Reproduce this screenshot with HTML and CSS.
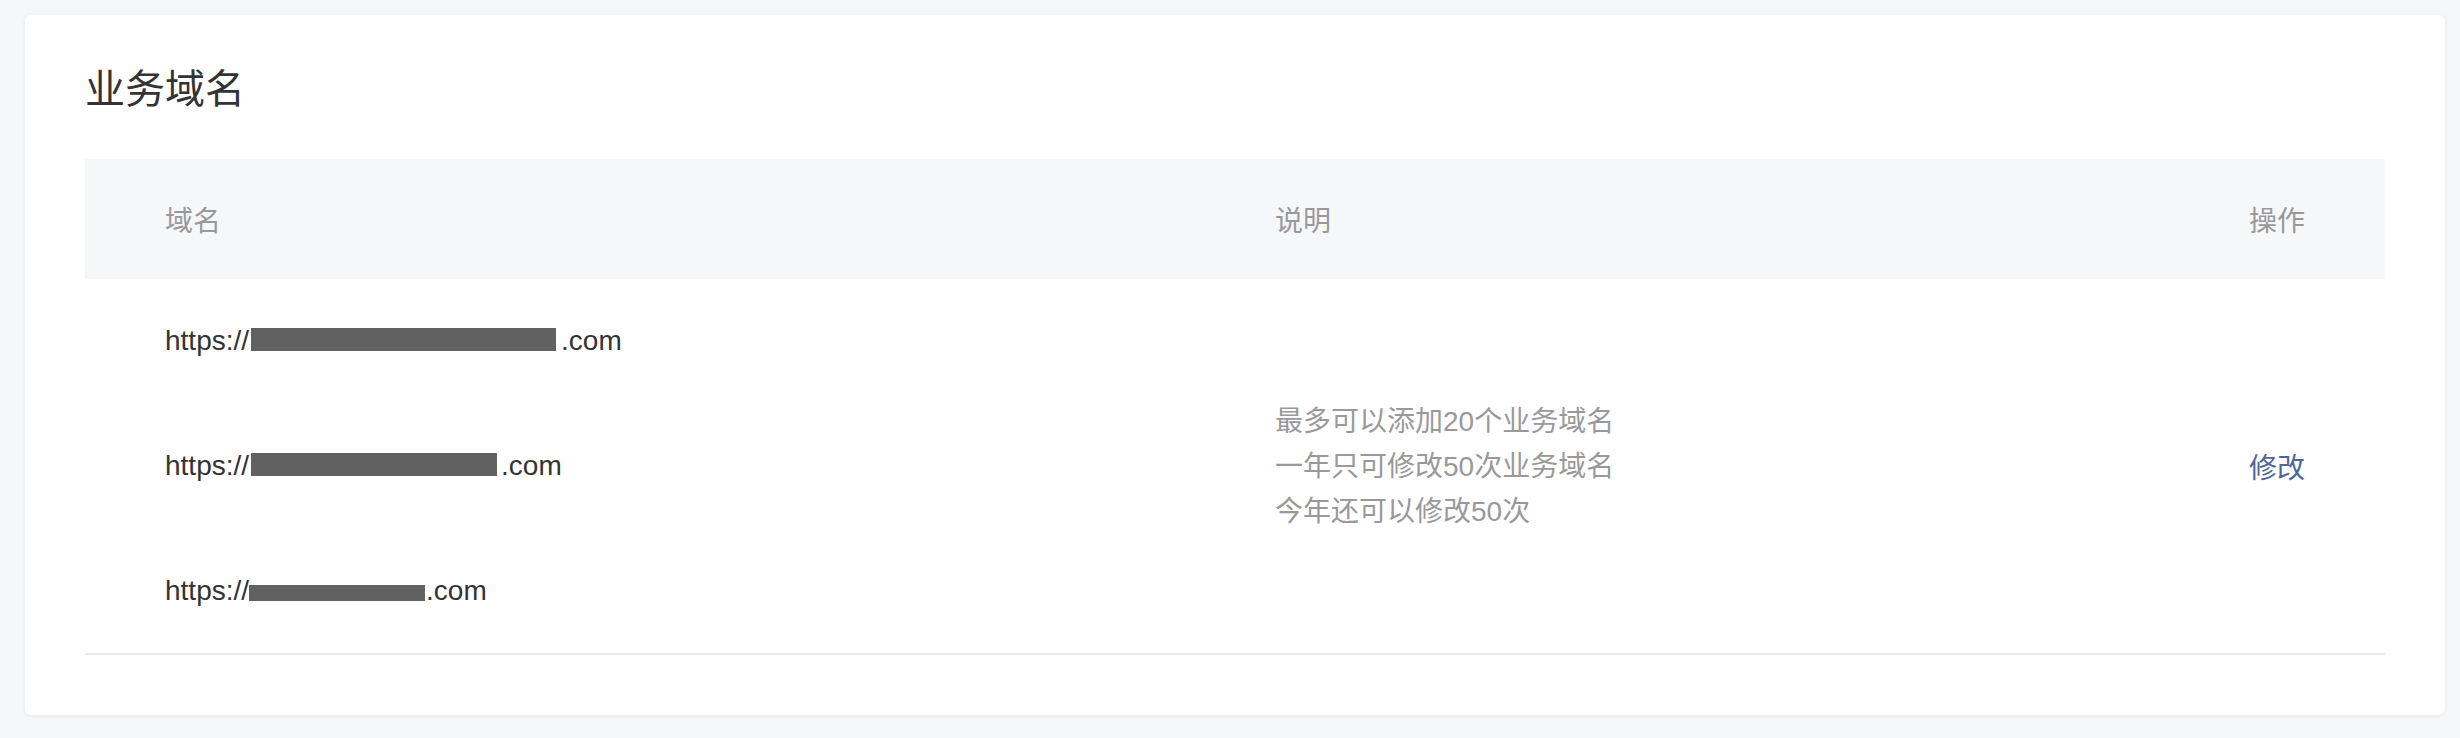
FILE: index.html
```html
<!DOCTYPE html>
<html lang="zh-CN">
<head>
<meta charset="utf-8">
<title>业务域名</title>
<link rel="stylesheet" href="styles.css">
</head>
<body>
  <div class="page">
    <section class="card">
      <h1 class="title">业务域名</h1>
      <div class="table">
        <div class="thead">
          <div class="th">域名</div>
          <div class="th">说明</div>
          <div class="th th-op">操作</div>
        </div>
        <div class="tbody">
          <div class="col-domains">
            <div class="row"><span class="url">https://<span class="mask mask-1"></span>.com</span></div>
            <div class="row"><span class="url">https://<span class="mask mask-2"></span>.com</span></div>
            <div class="row"><span class="url">https://<span class="mask mask-3"></span>.com</span></div>
          </div>
          <div class="col-desc">
            <p>最多可以添加20个业务域名</p>
            <p>一年只可修改50次业务域名</p>
            <p>今年还可以修改50次</p>
          </div>
          <div class="col-op"><a class="link" href="#">修改</a></div>
        </div>
      </div>
    </section>
  </div>
</body>
</html>
```

FILE: styles.css
```css
html, body {
  margin: 0;
  padding: 0;
  background: #f6f7f9;
}

body {
  font-family: "Liberation Sans", "Noto Sans CJK SC", sans-serif;
  color: #333;
}

.page {
  padding: 15px 15px 23px 25px;
}

.card {
  background: #fff;
  border-radius: 6px;
  box-shadow: 0 1px 4px rgba(0, 0, 0, 0.08);
  padding: 43px 60px 60px;
}

.title {
  margin: 0 0 45px;
  font-family: "Noto Sans CJK SC", sans-serif;
  font-size: 40px;
  line-height: 56px;
  font-weight: 400;
  color: #333;
}

.thead {
  display: grid;
  grid-template-columns: 1110px 1fr 300px;
  height: 120px;
  align-items: center;
  background: #f6f7f9;
}

.th {
  padding: 0 80px;
  font-family: "Noto Sans CJK SC", sans-serif;
  font-size: 28px;
  color: #999;
}

.th-op {
  text-align: right;
}

.tbody {
  display: grid;
  grid-template-columns: 1110px 1fr 300px;
  align-items: center;
  border-bottom: 2px solid #e8e8e8;
}

.col-domains {
  display: flex;
  flex-direction: column;
}

.row {
  height: 124.7px;
  display: flex;
  align-items: center;
  padding: 0 80px;
}

.url {
  font-size: 28px;
  color: #333;
  white-space: nowrap;
}

.mask {
  display: inline-block;
  height: 23px;
  background: #616161;
  vertical-align: -1px;
}

.mask-1 { width: 305px; margin: 0 5px 0 2px; }
.mask-2 { width: 246px; margin: 0 4px 0 2px; }
.mask-3 { width: 176px; height: 16px; margin: 0 1px 0 0; }

.col-desc {
  padding: 0 80px;
  font-family: "Liberation Sans", "Noto Sans CJK SC", sans-serif;
  font-size: 28px;
  line-height: 45px;
  color: #999;
}

.col-desc p {
  margin: 0;
}

.col-op {
  padding: 0 80px;
  text-align: right;
}

.link {
  font-family: "Noto Sans CJK SC", sans-serif;
  font-size: 28px;
  color: #4d6699;
  text-decoration: none;
}
```
